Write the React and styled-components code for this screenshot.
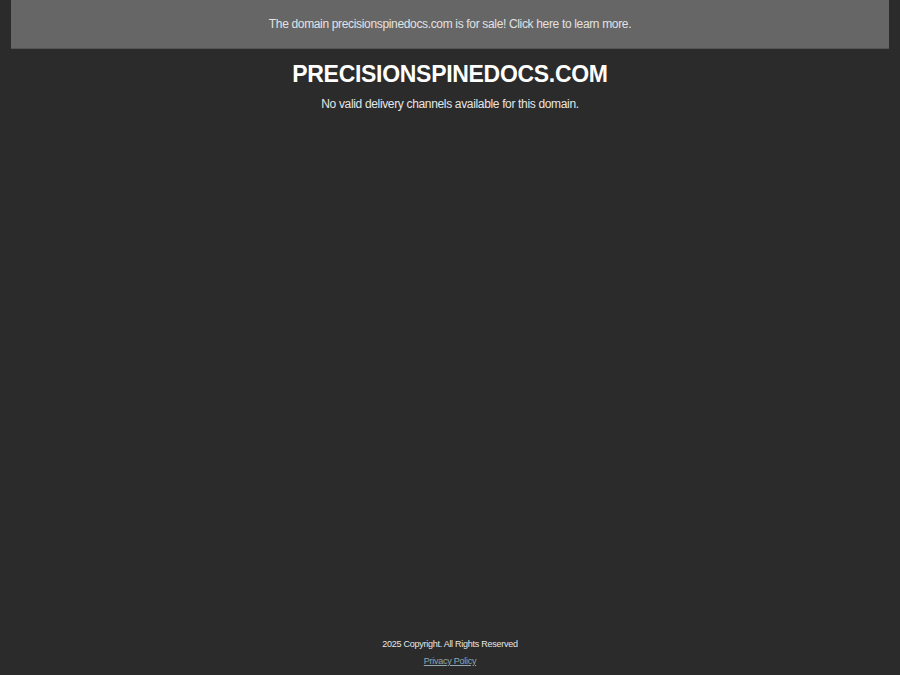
import React from "react";
import styled, { createGlobalStyle } from "styled-components";

const GlobalStyle = createGlobalStyle`
  html, body {
    margin: 0;
    padding: 0;
    height: 100%;
    background: #2b2b2b;
    font-family: "Liberation Sans", Arial, sans-serif;
  }
  #root {
    min-height: 100%;
  }
`;

const Page = styled.div`
  min-height: 675px;
  display: flex;
  flex-direction: column;
  align-items: center;
  padding: 0 11px;
  box-sizing: border-box;
`;

const SaleBanner = styled.a`
  display: block;
  align-self: stretch;
  background: #666666;
  border-bottom: 1px solid #555;
  color: #e2e2e2;
  font-size: 12px;
  letter-spacing: -0.34px;
  text-align: center;
  text-decoration: none;
  padding: 17px 0 16px;
  line-height: 15px;
`;

const Title = styled.h1`
  margin: 11px 0 0;
  color: #ffffff;
  font-size: 23px;
  letter-spacing: -0.3px;
  font-weight: bold;
  line-height: 28px;
`;

const Message = styled.p`
  margin: 9px 0 0;
  color: #e6e6e6;
  font-size: 12px;
  letter-spacing: -0.34px;
  line-height: 14px;
`;

const Footer = styled.footer`
  margin-top: auto;
  padding-bottom: 9px;
  display: flex;
  flex-direction: column;
  align-items: center;
  gap: 7px;
  font-size: 9px;
  letter-spacing: -0.26px;
  color: #e6e6e6;
`;

const PolicyLink = styled.a`
  color: #8fa8b0;
  text-decoration: underline;
`;

export default function App() {
  return (
    <>
      <GlobalStyle />
      <Page>
        <SaleBanner href="#">
          The domain precisionspinedocs.com is for sale! Click here to learn more.
        </SaleBanner>
        <Title>PRECISIONSPINEDOCS.COM</Title>
        <Message>No valid delivery channels available for this domain.</Message>
        <Footer>
          <span>2025 Copyright. All Rights Reserved</span>
          <PolicyLink href="#">Privacy Policy</PolicyLink>
        </Footer>
      </Page>
    </>
  );
}
